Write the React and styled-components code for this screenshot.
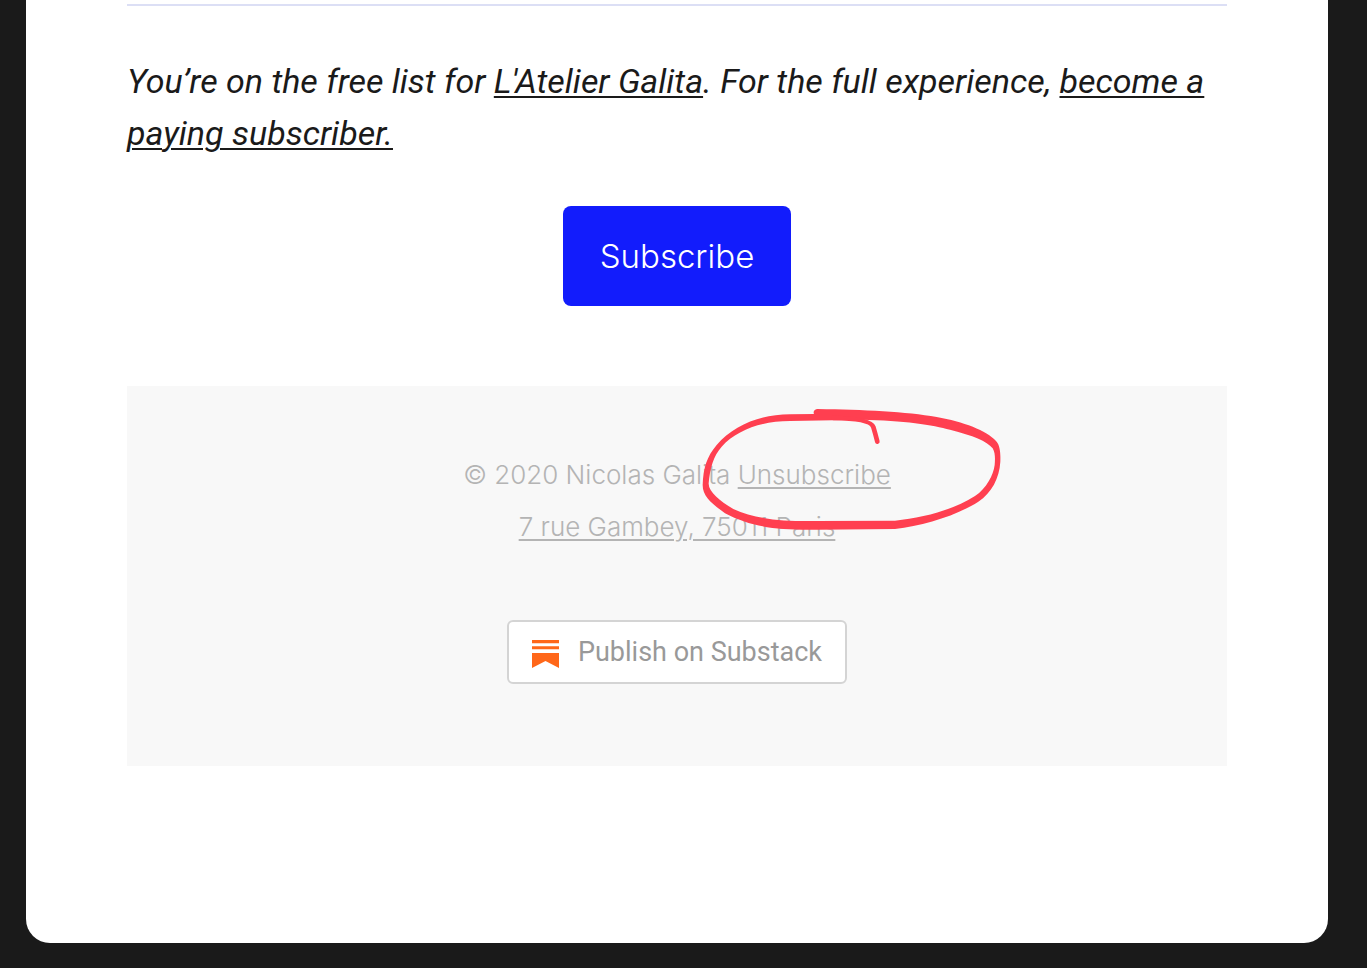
import React from "react";
import styled, { createGlobalStyle } from "styled-components";

const GlobalStyle = createGlobalStyle`
  * { box-sizing: border-box; }
  body {
    margin: 0;
    background: #1a1a1a;
    font-family: Inter, "Liberation Sans", sans-serif;
  }
`;

const Page = styled.div`
  padding: 0 39px 25px 26px;
`;

const Sheet = styled.main`
  padding: 4px 101px 177px;
  background: #fff;
  border-radius: 0 0 24px 24px;
`;

const Rule = styled.hr`
  height: 2px;
  margin: 0 0 49px;
  border: 0;
  background: #dcdff5;
`;

const Notice = styled.p`
  margin: 0 0 47px;
  color: #1a1a1a;
  font-family: Roboto, "Liberation Sans", sans-serif;
  font-size: 34px;
  font-style: italic;
  line-height: 52px;
`;

const TextLink = styled.a`
  color: inherit;
  text-decoration: underline;
  text-decoration-thickness: 2px;
  text-underline-offset: 3px;
`;

const Actions = styled.div`
  display: flex;
  justify-content: center;
  margin-bottom: 80px;
`;

const SubscribeButton = styled.button`
  height: 100px;
  padding: 0 37px;
  border: 0;
  border-radius: 8px;
  background: #121cfc;
  color: #fff;
  font-family: inherit;
  font-size: 33px;
  font-weight: 300;
  cursor: pointer;
`;

const Footer = styled.footer`
  position: relative;
  display: flex;
  flex-direction: column;
  align-items: center;
  padding: 63px 24px 82px;
  background: #f8f8f8;
`;

const Legal = styled.address`
  margin-bottom: 67px;
  color: #b4b4b4;
  font-size: 26px;
  font-style: normal;
  font-weight: 300;
  line-height: 52px;
  text-align: center;
`;

const PublishLink = styled.a`
  display: flex;
  align-items: center;
  gap: 19px;
  height: 64px;
  padding: 0 23px;
  border: 2px solid #d4d4d4;
  border-radius: 6px;
  background: #fff;
  color: #999;
  font-family: Roboto, "Liberation Sans", sans-serif;
  font-size: 27px;
  text-decoration: none;
`;

const BookmarkIcon = styled.svg`
  width: 27px;
  height: 32px;
  flex: none;
`;

const Scribble = styled.svg`
  position: absolute;
  top: 9px;
  left: calc(50% + 13px);
  width: 330px;
  height: 150px;
  pointer-events: none;
`;

export default function App() {
  return (
    <>
      <GlobalStyle />
      <Page>
        <Sheet>
          <Rule />
          <Notice>
            You’re on the free list for <TextLink href="#home">L'Atelier Galita</TextLink>. For the
            full experience, <TextLink href="#subscribe">become a paying subscriber.</TextLink>
          </Notice>
          <Actions>
            <SubscribeButton type="button">Subscribe</SubscribeButton>
          </Actions>
          <Footer>
            <Legal>
              © 2020 Nicolas Galita <TextLink href="#unsubscribe">Unsubscribe</TextLink>
              <br />
              <TextLink href="#address">7 rue Gambey, 75011 Paris</TextLink>
            </Legal>
            <PublishLink href="#publish">
              <BookmarkIcon viewBox="0 0 27 32" fill="#ff6719" aria-hidden="true">
                <path d="M0 4h27v3.2H0zM0 10.2h27v3H0zM0 17h27v15l-13.5-7L0 32z" />
              </BookmarkIcon>
              Publish on Substack
            </PublishLink>
            <Scribble viewBox="0 0 990 450" aria-hidden="true">
              <path
                fill="#ff3f50"
                fillRule="evenodd"
                d="M383 42C520 44 650 50 740 66C820 80 890 107 918 138C930 150 932 175 931 200C928 250 905 293 865 320C800 362 700 392 615 402L380 404C260 406 180 395 105 355C65 325 38 305 38 270C40 220 50 185 80 150C130 92 210 58 300 58L372 57C368 49 375 42 383 42ZM300 78L430 76L515 74C640 76 730 90 780 104C850 122 890 138 908 160C917 175 915 195 914 210C910 240 890 280 855 303C790 345 700 368 615 377L380 378C290 380 200 374 130 342C90 318 55 290 56 265C60 220 70 183 95 155C140 105 215 78 300 78Z"
              />
              <path
                fill="none"
                stroke="#ff3f50"
                strokeWidth="14"
                strokeLinecap="round"
                d="M430 69C500 70 544 78 550 96Q556 116 562 140"
              />
            </Scribble>
          </Footer>
        </Sheet>
      </Page>
    </>
  );
}
